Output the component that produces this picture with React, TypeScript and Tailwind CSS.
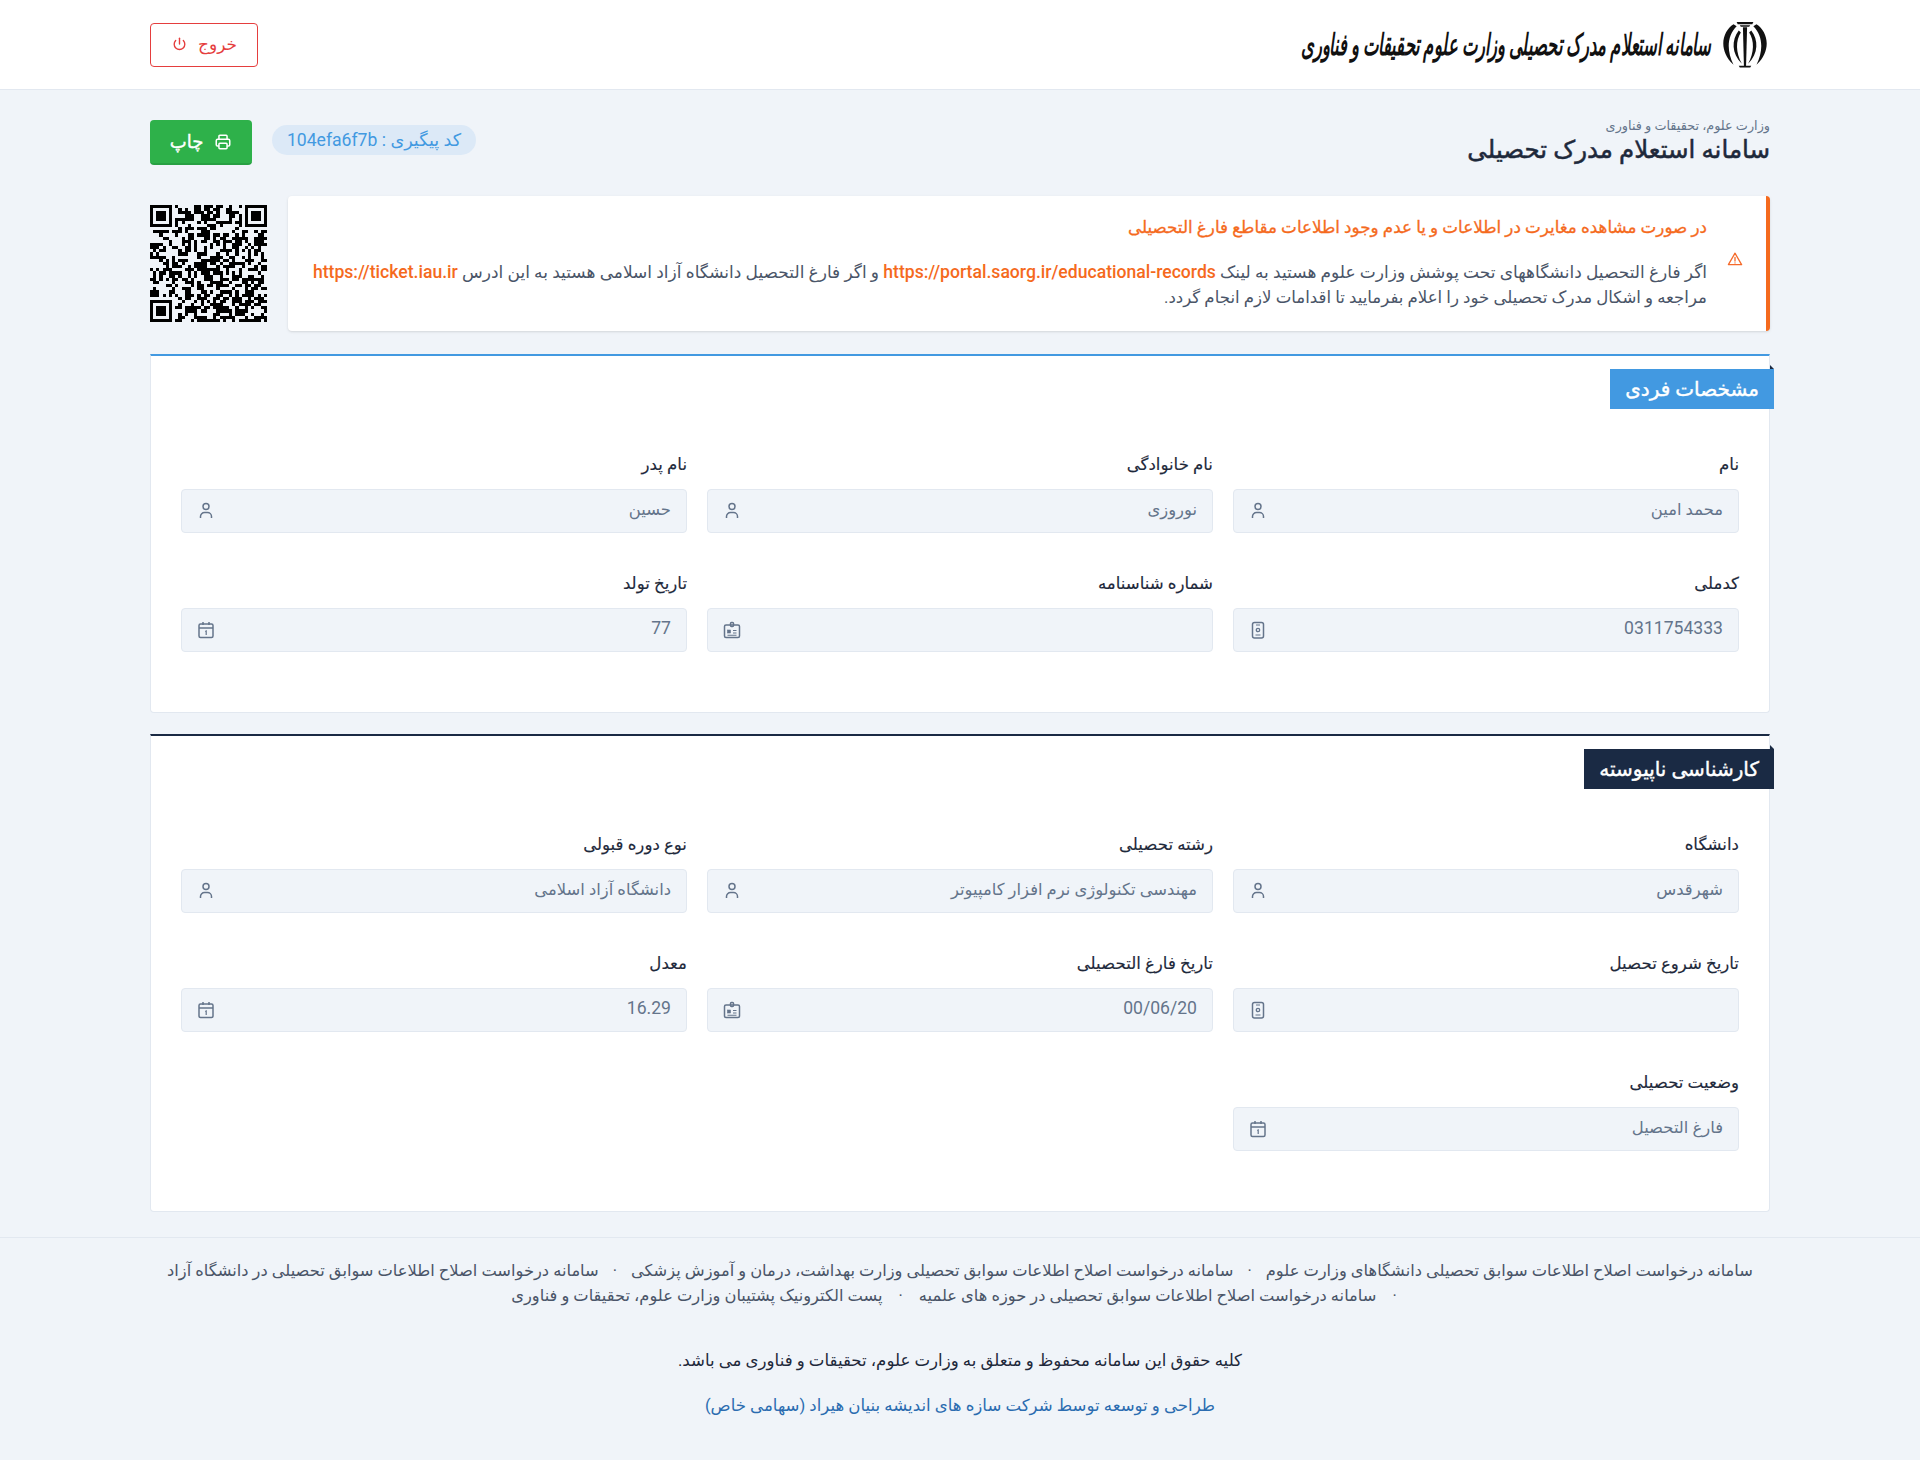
import type { ReactNode } from 'react';

const QR_SIZE = 37;

// finder squares sit at three corners, the rest is filled from a small generator
function buildQr() {
  const cells: boolean[][] = [];
  let seed = 0x2f6e2b1;
  for (let y = 0; y < QR_SIZE; y++) {
    const row: boolean[] = [];
    for (let x = 0; x < QR_SIZE; x++) {
      seed ^= seed << 13;
      seed ^= seed >>> 17;
      seed ^= seed << 5;
      row.push((seed & 7) < 4);
    }
    cells.push(row);
  }
  const finder = (ox: number, oy: number) => {
    for (let y = -1; y < 8; y++) {
      for (let x = -1; x < 8; x++) {
        const cx = ox + x;
        const cy = oy + y;
        if (cx < 0 || cy < 0 || cx >= QR_SIZE || cy >= QR_SIZE) continue;
        const ring = x === 0 || x === 6 || y === 0 || y === 6;
        const inner = x >= 2 && x <= 4 && y >= 2 && y <= 4;
        cells[cy][cx] = x >= 0 && x <= 6 && y >= 0 && y <= 6 && (ring || inner);
      }
    }
  };
  finder(0, 0);
  finder(QR_SIZE - 7, 0);
  finder(0, QR_SIZE - 7);
  return cells;
}

function QrCode() {
  const cells = buildQr();
  return (
    <svg viewBox={`0 0 ${QR_SIZE} ${QR_SIZE}`} className="w-[117px] h-[117px] shrink-0" shapeRendering="crispEdges">
      {cells.map((row, y) =>
        row.map((on, x) => (on ? <rect key={`${x}-${y}`} x={x} y={y} width="1" height="1" fill="#000" /> : null))
      )}
    </svg>
  );
}

function Emblem() {
  return (
    <svg viewBox="3 2 44 46" className="w-[50px] h-[48px] shrink-0" fill="#111" stroke="none">
      {/* outer crescents */}
      <path d="M14 5C3 12 -1 30 14 44C7 30 8 16 17 7Z" />
      <path d="M36 5C47 12 51 30 36 44C43 30 42 16 33 7Z" />
      {/* inner crescents */}
      <path d="M19 11C12 20 12 33 22 43C16 32 16 21 21 13Z" />
      <path d="M31 11C38 20 38 33 28 43C34 32 34 21 29 13Z" />
      {/* sword */}
      <path d="M23 8H27L26 46H24Z" />
      <path d="M17 3H33L32 5H18Z" />
      <path d="M20 6H30L29 7.5H21Z" />
      <path d="M19 45H31L30 46.5H20Z" />
    </svg>
  );
}

function UserIcon() {
  return (
    <svg viewBox="0 0 20 20" className="w-5 h-5" fill="none" stroke="#64748b" strokeWidth="1.5">
      <circle cx="10" cy="5.5" r="3" />
      <path d="M4.5 17v-1.5a4 4 0 0 1 4-4h3a4 4 0 0 1 4 4V17" />
    </svg>
  );
}

function CalendarIcon() {
  return (
    <svg viewBox="0 0 20 20" className="w-5 h-5" fill="none" stroke="#64748b" strokeWidth="1.5">
      <rect x="3" y="4" width="14" height="13.5" rx="1.5" />
      <path d="M3 8h14M7 2v3M13 2v3" />
      <path d="M9.2 11.6l1-.6v4" strokeWidth="1.2" />
    </svg>
  );
}

function IdCardIcon() {
  return (
    <svg viewBox="0 0 20 20" className="w-5 h-5" fill="none" stroke="#64748b" strokeWidth="1.5">
      <rect x="2.5" y="5" width="15" height="12.5" rx="1.5" />
      <rect x="8.5" y="2.5" width="3" height="4" rx="1" />
      <rect x="5.5" y="10" width="3" height="3" fill="#64748b" strokeWidth="0.6" />
      <path d="M11 10.5h3.5M11 13h3.5M5.5 15.2h9" strokeWidth="1.1" />
    </svg>
  );
}

function BadgeIcon() {
  return (
    <svg viewBox="0 0 20 20" className="w-5 h-5" fill="none" stroke="#64748b" strokeWidth="1.5">
      <rect x="4.5" y="2.5" width="11" height="15.5" rx="2" />
      <path d="M8 5h4M7.5 15h5" strokeWidth="1.2" />
      <circle cx="10" cy="10" r="1.7" strokeWidth="1.3" />
    </svg>
  );
}

function PowerIcon() {
  return (
    <svg viewBox="0 0 16 16" className="w-[17px] h-[17px]" fill="none" stroke="#e53e3e" strokeWidth="1.3" strokeLinecap="round">
      <path d="M8 2v5.5" />
      <path d="M4.4 4.2a5 5 0 1 0 7.2 0" />
    </svg>
  );
}

function PrinterIcon() {
  return (
    <svg viewBox="0 0 20 20" className="w-[18px] h-[18px]" fill="none" stroke="#fff" strokeWidth="1.7">
      <path d="M5.5 7V3.5a1 1 0 0 1 1-1h7a1 1 0 0 1 1 1V7" />
      <path d="M5.5 14.5H4a1.5 1.5 0 0 1-1.5-1.5V8.5A1.5 1.5 0 0 1 4 7h12a1.5 1.5 0 0 1 1.5 1.5V13a1.5 1.5 0 0 1-1.5 1.5h-1.5" />
      <rect x="5.5" y="11.5" width="9" height="6" rx="1" />
    </svg>
  );
}

function WarningIcon() {
  return (
    <svg viewBox="0 0 16 16" className="w-[16px] h-[16px] shrink-0 mb-[10px]" fill="none" stroke="#f56a2a" strokeWidth="1.3" strokeLinejoin="round" strokeLinecap="round">
      <path d="M8 2.2L14.6 13.6H1.4Z" />
      <path d="M8 6.5v3.6M8 11.8v.1" />
    </svg>
  );
}

function Field({ label, value, latin, icon }: { label: string; value?: string; latin?: boolean; icon: ReactNode }) {
  return (
    <div>
      <label className="block text-[16.6px] leading-[24px] text-[#1e293b] mb-[12px] [-webkit-text-stroke:0.15px]">{label}</label>
      <div className="h-[44px] flex items-center justify-between bg-[#f0f4f9] border border-[#e2e8f0] rounded-[4px] pr-[15px] pl-[14px] text-[#64748b]">
        <span className={latin ? 'text-[17.6px] pb-[3px]' : 'text-[16.4px] pb-[1px]'}>{value}</span>
        {icon}
      </div>
    </div>
  );
}

function Section({ title, ribbon, border, children }: { title: string; ribbon: string; border: string; children: ReactNode }) {
  return (
    <section className={`relative bg-white border border-[#e2e8f0] rounded-b-[4px] border-t-2 ${border} px-[30px] pt-[97px] pb-[60px]`}>
      <div className={`absolute -right-[5px] top-[13px] h-[40px] px-[15px] flex items-center text-[20px] text-white [-webkit-text-stroke:0.4px] ${ribbon}`}>{title}</div>
      <div className="absolute -right-[5px] top-[9px] w-[4px] h-[4px] bg-[#1a2a44] [clip-path:polygon(0_0,0_100%,100%_100%)]" />
      <div className="grid grid-cols-3 gap-x-[20px] gap-y-[39px]">{children}</div>
    </section>
  );
}

export default function App() {
  return (
    <div dir="rtl" className="min-h-[1460px] bg-[#f0f4f9] font-['Roboto','DejaVu_Sans',sans-serif]">
      {/* top bar */}
      <header className="h-[90px] bg-white border-b border-[#e2e8f0] px-[150px] flex items-center justify-between">
        <div className="flex items-center gap-[9px]">
          <Emblem />
          <span className="text-[30px] font-bold italic text-[#111] whitespace-nowrap scale-x-[0.55] origin-right">سامانه استعلام مدرک تحصیلی وزارت علوم تحقیقات و فناوری</span>
        </div>
        <button className="w-[108px] h-[44px] flex items-center justify-center gap-[10px] border border-[#e53e3e] rounded-[4px] text-[17px] text-[#e53e3e] bg-white">
          خروج
          <PowerIcon />
        </button>
      </header>

      <main className="px-[150px] pt-[30px]">
        <div className="flex items-center justify-between h-[46px]">
          <div className="-mt-[3px]">
            <div className="text-[12.8px] leading-[16px] text-[#64748b]">وزارت علوم، تحقیقات و فناوری</div>
            <h1 className="text-[24.5px] leading-[30px] mt-[1px] text-[#1e293b] [-webkit-text-stroke:0.5px]">سامانه استعلام مدرک تحصیلی</h1>
          </div>
          <div className="flex items-center gap-[20px]">
            <span className="h-[30px] w-[204px] -mt-[6px] rounded-full bg-[#dce9f7] text-[#4299e1] text-[17.6px] flex items-center justify-center">
              کد پیگیری : 104efa6f7b
            </span>
            <button className="w-[102px] h-[45px] -mt-[1px] flex items-center justify-center gap-[11px] bg-[#2eb14a] border-b-2 border-[#28a043] rounded-[4px] text-white text-[18px] [-webkit-text-stroke:0.4px]">
              <PrinterIcon />
              چاپ
            </button>
          </div>
        </div>

        <div className="flex items-center gap-[21px] mt-[30px] mb-[23px]">
          <div className="flex-1 h-[135px] bg-white border-r-4 border-r-[#f56a1d] rounded-[4px] shadow-sm flex items-center gap-[20px] pr-[23px] pl-[24px]">
            <WarningIcon />
            <div className="flex-1 -mt-[2px] text-[17px] leading-[25px] text-[#4a5568]">
              <p className="text-[16.75px] text-[#f56a1d] mb-[20px] [-webkit-text-stroke:0.3px]">در صورت مشاهده مغایرت در اطلاعات و یا عدم وجود اطلاعات مقاطع فارغ التحصیلی</p>
              <p>
                اگر فارغ التحصیل دانشگاههای تحت پوشش وزارت علوم هستید به لینک{' '}
                <a className="text-[17.6px] font-medium text-[#f56a1d]">https://portal.saorg.ir/educational-records</a> و اگر فارغ التحصیل دانشگاه آزاد اسلامی هستید به این ادرس{' '}
                <a className="text-[17.6px] font-medium text-[#f56a1d]">https://ticket.iau.ir</a>
                <br />
                <span className="text-[16.6px]">مراجعه و اشکال مدرک تحصیلی خود را اعلام بفرمایید تا اقدامات لازم انجام گردد.</span>
              </p>
            </div>
          </div>
          <QrCode />
        </div>

        <Section title="مشخصات فردی" border="border-t-[#4299e1]" ribbon="bg-[#4299e1]">
          <Field label="نام" value="محمد امین" icon={<UserIcon />} />
          <Field label="نام خانوادگی" value="نوروزی" icon={<UserIcon />} />
          <Field label="نام پدر" value="حسین" icon={<UserIcon />} />
          <Field label="کدملی" value="0311754333" latin icon={<BadgeIcon />} />
          <Field label="شماره شناسنامه" icon={<IdCardIcon />} />
          <Field label="تاریخ تولد" value="77" latin icon={<CalendarIcon />} />
        </Section>

        <div className="h-[21px]" />

        <Section title="کارشناسی ناپیوسته" border="border-t-[#1a2a44]" ribbon="bg-[#1a2a44]">
          <Field label="دانشگاه" value="شهرقدس" icon={<UserIcon />} />
          <Field label="رشته تحصیلی" value="مهندسی تکنولوژی نرم افزار کامپیوتر" icon={<UserIcon />} />
          <Field label="نوع دوره قبولی" value="دانشگاه آزاد اسلامی" icon={<UserIcon />} />
          <Field label="تاریخ شروع تحصیل" icon={<BadgeIcon />} />
          <Field label="تاریخ فارغ التحصیلی" value="00/06/20" latin icon={<IdCardIcon />} />
          <Field label="معدل" value="16.29" latin icon={<CalendarIcon />} />
          <Field label="وضعیت تحصیلی" value="فارغ التحصیل" icon={<CalendarIcon />} />
        </Section>
      </main>

      <footer className="mt-[25px] border-t border-[#e2e8f0] pt-[20px] text-center text-[16.3px] leading-[25px] text-[#4a5568]">
        <p>
          سامانه درخواست اصلاح اطلاعات سوابق تحصیلی دانشگاهای وزارت علوم <span className="mx-[10px]">·</span> سامانه درخواست اصلاح اطلاعات سوابق تحصیلی وزارت بهداشت، درمان و آموزش پزشکی <span className="mx-[10px]">·</span> سامانه درخواست اصلاح اطلاعات سوابق تحصیلی در دانشگاه آزاد
          <br />
          <span className="mx-[12px]">·</span> سامانه درخواست اصلاح اطلاعات سوابق تحصیلی در حوزه های علمیه <span className="mx-[12px]">·</span> پست الکترونیک پشتیبان وزارت علوم، تحقیقات و فناوری
        </p>
        <p className="mt-[40px] text-[16.6px] text-[#1e293b]">کلیه حقوق این سامانه محفوظ و متعلق به وزارت علوم، تحقیقات و فناوری می باشد.</p>
        <p className="mt-[20px] text-[16.6px] text-[#2b6cb0]">طراحی و توسعه توسط شرکت سازه های اندیشه بنیان هیراد (سهامی خاص)</p>
      </footer>
    </div>
  );
}
